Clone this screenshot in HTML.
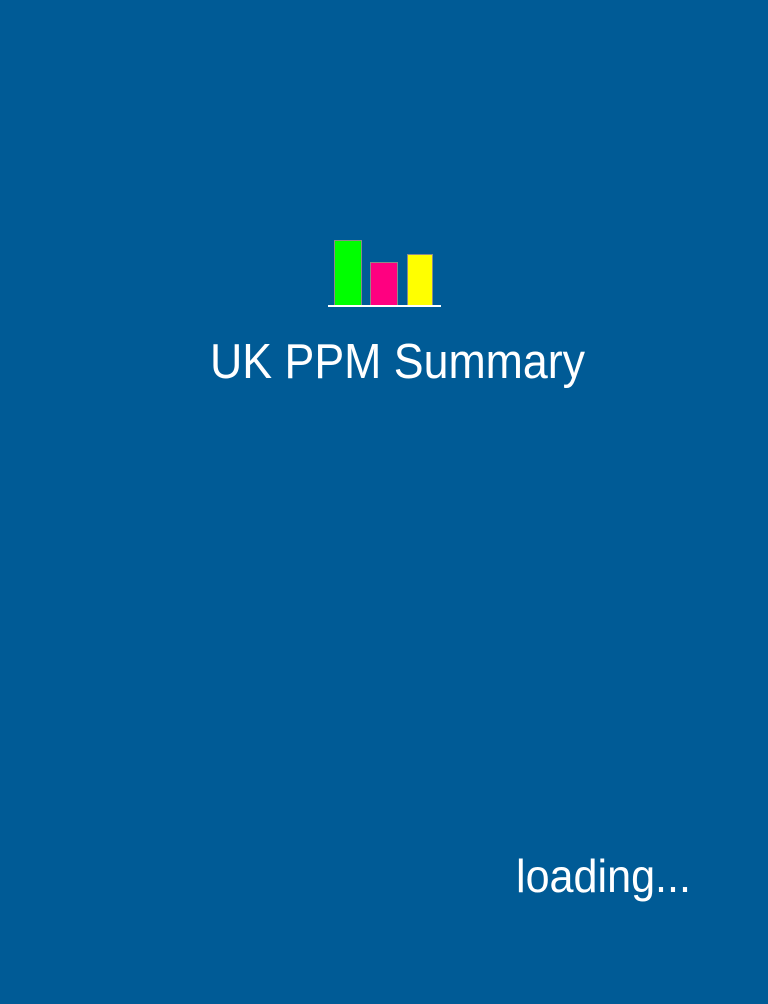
<!DOCTYPE html>
<html><head><meta charset="utf-8"><style>
html,body{margin:0;padding:0;background:#005b96;width:768px;height:1004px;overflow:hidden}
</style></head><body>
<svg width="768" height="1004" xmlns="http://www.w3.org/2000/svg" style="display:block">
<rect width="768" height="1004" fill="#005b96"/>
<rect x="334.5" y="240.5" width="27" height="65" fill="#00ff00" stroke="#8a8a8a" stroke-width="1"/>
<rect x="370.5" y="262.5" width="27" height="43" fill="#ff0080" stroke="#8a8a8a" stroke-width="1"/>
<rect x="407.5" y="254.5" width="25" height="51" fill="#ffff00" stroke="#8a8a8a" stroke-width="1"/>
<rect x="328" y="305" width="113" height="2" fill="#ffffff"/>
<text x="210" y="378" font-family="Liberation Sans, sans-serif" font-size="49" fill="#ffffff" textLength="375" lengthAdjust="spacingAndGlyphs">UK PPM Summary</text>
<text x="516" y="892" font-family="Liberation Sans, sans-serif" font-size="46" fill="#ffffff" textLength="175" lengthAdjust="spacingAndGlyphs">loading...</text>
</svg>
</body></html>
